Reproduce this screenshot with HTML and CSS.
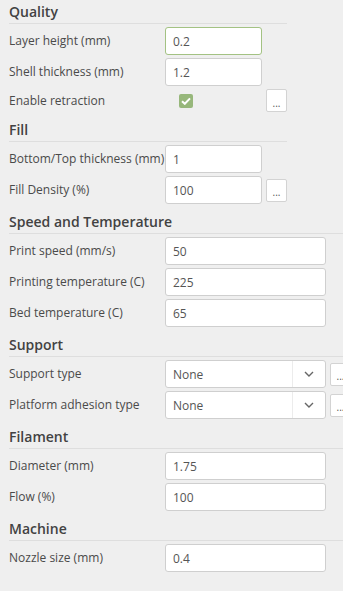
FILE: index.html
```html
<!DOCTYPE html>
<html lang="en">
<head>
    <meta charset="UTF-8">
    <meta name="viewport" content="width=device-width, initial-scale=1.0">
    <title>Print settings</title>
    <link rel="stylesheet" href="styles.css">
</head>
<body>
    <form class="settings">
        <section class="group">
            <h2 class="group-title">Quality</h2>
            <div class="rows">
                <label class="row-label">Layer height (mm)</label>
                <input class="field is-focused" type="text" value="0.2">
                <span></span>

                <label class="row-label">Shell thickness (mm)</label>
                <input class="field" type="text" value="1.2">
                <span></span>

                <label class="row-label">Enable retraction</label>
                <span class="check-cell">
                    <span class="checkbox">
                        <svg width="10" height="8" viewBox="0 0 10 8"><path d="M1 4.2 L3.8 6.8 L9 1.4" fill="none" stroke="#fff" stroke-width="2"/></svg>
                    </span>
                </span>
                <button class="more-btn" type="button">...</button>
            </div>
        </section>

        <section class="group">
            <h2 class="group-title">Fill</h2>
            <div class="rows">
                <label class="row-label">Bottom/Top thickness (mm)</label>
                <input class="field" type="text" value="1">
                <span></span>

                <label class="row-label">Fill Density (%)</label>
                <input class="field" type="text" value="100">
                <button class="more-btn" type="button">...</button>
            </div>
        </section>

        <section class="group">
            <h2 class="group-title">Speed and Temperature</h2>
            <div class="rows wide">
                <label class="row-label">Print speed (mm/s)</label>
                <input class="field" type="text" value="50">
                <span></span>

                <label class="row-label">Printing temperature (C)</label>
                <input class="field" type="text" value="225">
                <span></span>

                <label class="row-label">Bed temperature (C)</label>
                <input class="field" type="text" value="65">
                <span></span>
            </div>
        </section>

        <section class="group">
            <h2 class="group-title">Support</h2>
            <div class="rows wide">
                <label class="row-label">Support type</label>
                <div class="select">
                    <span class="select-value">None</span>
                    <span class="select-arrow">
                        <svg width="10" height="6" viewBox="0 0 10 6"><path d="M1 1 L5 5 L9 1" fill="none" stroke="#666" stroke-width="1.4"/></svg>
                    </span>
                </div>
                <button class="more-btn" type="button">...</button>

                <label class="row-label">Platform adhesion type</label>
                <div class="select">
                    <span class="select-value">None</span>
                    <span class="select-arrow">
                        <svg width="10" height="6" viewBox="0 0 10 6"><path d="M1 1 L5 5 L9 1" fill="none" stroke="#666" stroke-width="1.4"/></svg>
                    </span>
                </div>
                <button class="more-btn" type="button">...</button>
            </div>
        </section>

        <section class="group">
            <h2 class="group-title">Filament</h2>
            <div class="rows wide">
                <label class="row-label">Diameter (mm)</label>
                <input class="field" type="text" value="1.75">
                <span></span>

                <label class="row-label">Flow (%)</label>
                <input class="field" type="text" value="100">
                <span></span>
            </div>
        </section>

        <section class="group">
            <h2 class="group-title">Machine</h2>
            <div class="rows wide">
                <label class="row-label">Nozzle size (mm)</label>
                <input class="field" type="text" value="0.4">
                <span></span>
            </div>
        </section>
    </form>
</body>
</html>
```

FILE: styles.css
```css
html, body {
    overflow: hidden;
}

body {
    margin: 0;
    padding: 3px 0 0 9px;
    background: #efefef;
    font-family: 'Open Sans', 'DejaVu Sans', sans-serif;
    font-size: 12px;
    color: #4a4a4a;
}

.group {
    width: max-content;
    padding-right: 4px;
    margin-bottom: 9px;
}

.group-title {
    margin: 0;
    font-size: 14px;
    font-weight: 600;
    line-height: 18px;
    color: #424242;
    padding-bottom: 2px;
    border-bottom: 1px solid #dedede;
}

.rows {
    display: grid;
    grid-template-columns: 152px 97px 21px;
    column-gap: 4px;
    row-gap: 3px;
    align-items: center;
    margin-top: 3px;
}

.rows.wide {
    grid-template-columns: 152px 161px 21px;
}

.row-label {
    white-space: nowrap;
    line-height: 18px;
}

.field {
    box-sizing: border-box;
    width: 100%;
    height: 28px;
    margin: 0;
    padding: 0 7px;
    background: #fff;
    border: 1px solid #cfcfcf;
    border-radius: 3px;
    font-family: inherit;
    font-size: 12px;
    color: #555;
    outline: none;
}

.field.is-focused {
    border-color: #a3c283;
}

.check-cell {
    display: flex;
    align-items: center;
    height: 23px;
    padding-left: 14px;
}

.checkbox {
    display: flex;
    align-items: center;
    justify-content: center;
    width: 14px;
    height: 14px;
    border-radius: 2px;
    background: #97b77b;
}

.more-btn {
    box-sizing: border-box;
    width: 21px;
    height: 23px;
    padding: 4px 0 0;
    background: #fff;
    border: 1px solid #d3d3d3;
    border-radius: 2px;
    font-family: inherit;
    font-size: 10px;
    color: #555;
    line-height: 1;
}

.select {
    box-sizing: border-box;
    display: flex;
    height: 28px;
    background: #fff;
    border: 1px solid #cfcfcf;
    border-radius: 3px;
    color: #555;
}

.select-value {
    flex: 1;
    display: flex;
    align-items: center;
    padding-left: 7px;
}

.select-arrow {
    display: flex;
    align-items: center;
    justify-content: center;
    width: 32px;
    border-left: 1px solid #ececec;
}
```
